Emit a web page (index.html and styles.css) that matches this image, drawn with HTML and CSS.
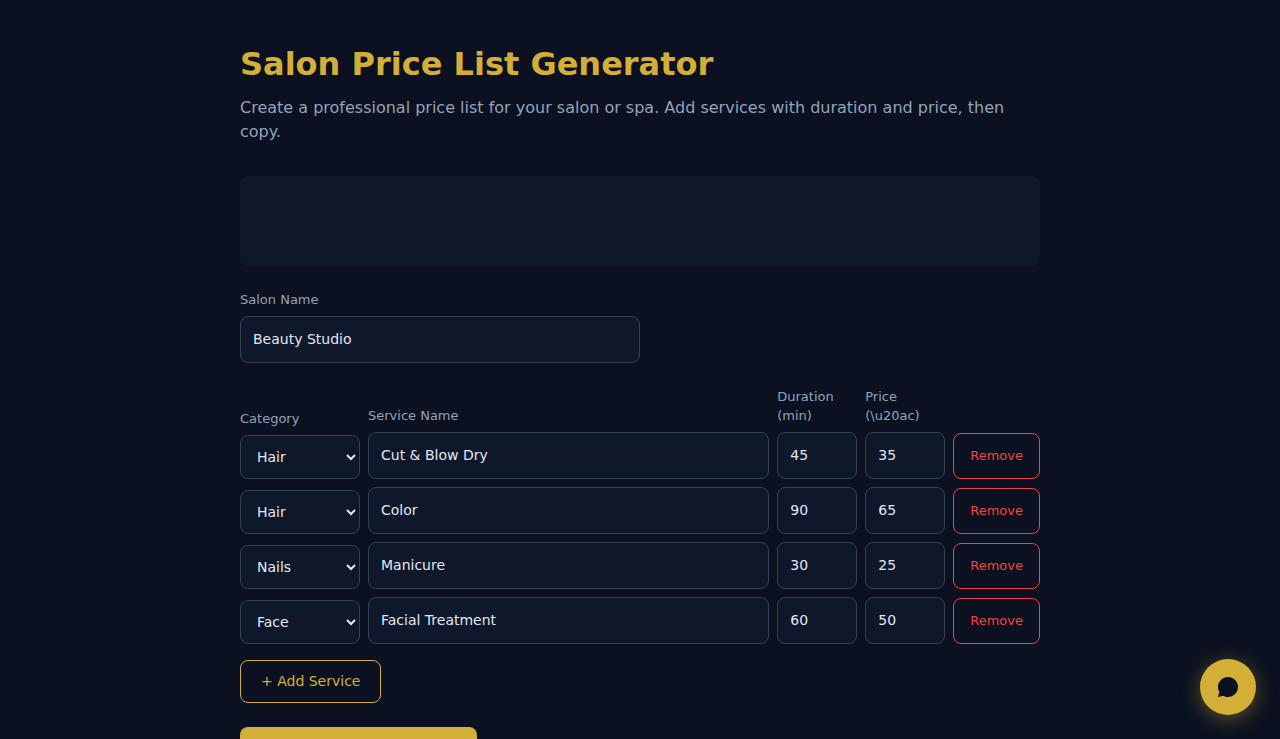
FILE: index.html
```html
<!DOCTYPE html>
<html lang="en">
<head>
    <meta charset="UTF-8">
    <meta name="viewport" content="width=device-width, initial-scale=1.0">
    <title>Salon Price List Generator</title>
    <link rel="stylesheet" href="styles.css">
</head>
<body>
    <main class="container">
        <h1>Salon Price List Generator</h1>
        <p class="subtitle">Create a professional price list for your salon or spa. Add services with duration and price, then copy.</p>

        <div class="banner"></div>

        <div class="field salon-field">
            <label for="salon-name">Salon Name</label>
            <input type="text" id="salon-name" value="Beauty Studio">
        </div>

        <div class="services">
            <div class="service-row">
                <div class="field">
                    <label for="category-1">Category</label>
                    <select id="category-1">
                        <option selected>Hair</option>
                        <option>Nails</option>
                        <option>Face</option>
                    </select>
                </div>
                <div class="field">
                    <label for="service-1">Service Name</label>
                    <input type="text" id="service-1" value="Cut &amp; Blow Dry">
                </div>
                <div class="field">
                    <label for="duration-1">Duration (min)</label>
                    <input type="number" id="duration-1" value="45">
                </div>
                <div class="field">
                    <label for="price-1">Price (\u20ac)</label>
                    <input type="number" id="price-1" value="35">
                </div>
                <button type="button" class="remove-btn">Remove</button>
            </div>

            <div class="service-row">
                <select aria-label="Category">
                    <option selected>Hair</option>
                    <option>Nails</option>
                    <option>Face</option>
                </select>
                <input type="text" aria-label="Service Name" value="Color">
                <input type="number" aria-label="Duration" value="90">
                <input type="number" aria-label="Price" value="65">
                <button type="button" class="remove-btn">Remove</button>
            </div>

            <div class="service-row">
                <select aria-label="Category">
                    <option>Hair</option>
                    <option selected>Nails</option>
                    <option>Face</option>
                </select>
                <input type="text" aria-label="Service Name" value="Manicure">
                <input type="number" aria-label="Duration" value="30">
                <input type="number" aria-label="Price" value="25">
                <button type="button" class="remove-btn">Remove</button>
            </div>

            <div class="service-row">
                <select aria-label="Category">
                    <option>Hair</option>
                    <option>Nails</option>
                    <option selected>Face</option>
                </select>
                <input type="text" aria-label="Service Name" value="Facial Treatment">
                <input type="number" aria-label="Duration" value="60">
                <input type="number" aria-label="Price" value="50">
                <button type="button" class="remove-btn">Remove</button>
            </div>
        </div>

        <div class="actions">
            <button type="button" class="add-btn">+ Add Service</button>
            <button type="button" class="generate-btn">Generate Price List</button>
        </div>
    </main>

    <button type="button" class="chat-btn" aria-label="Open chat">
        <svg width="24" height="24" viewBox="0 0 24 24" fill="currentColor" aria-hidden="true">
            <path d="M12 2C6.48 2 2 6.48 2 12c0 1.8.48 3.5 1.3 4.95L2 22l5.05-1.3C8.5 21.52 10.2 22 12 22c5.52 0 10-4.48 10-10S17.52 2 12 2z"/>
        </svg>
    </button>
</body>
</html>
```
FILE: styles.css
```css
* {
    box-sizing: border-box;
}

body {
    margin: 0;
    font-family: "DejaVu Sans", sans-serif;
    font-size: 16px;
    line-height: 1.5;
    background-color: #0b1120;
    color: #e2e8f0;
}

.container {
    max-width: 840px;
    margin: 0 auto;
    padding: 40px 20px;
}

h1 {
    margin: 0 0 8px;
    font-size: 32px;
    color: #d4af37;
}

.subtitle {
    margin: 0 0 32px;
    color: #94a3b8;
}

.banner {
    min-height: 90px;
    margin-bottom: 24px;
    border-radius: 8px;
    background-color: #0f172a;
}

.field {
    display: flex;
    flex-direction: column;
    gap: 6px;
    min-width: 0;
}

.salon-field {
    max-width: 400px;
    margin-bottom: 24px;
}

label {
    font-size: 13px;
    color: #94a3b8;
}

input, select {
    width: 100%;
    min-width: 0;
    padding: 12px;
    border: 1px solid #334155;
    border-radius: 8px;
    background-color: #0f172a;
    color: #e2e8f0;
    font-family: inherit;
    font-size: 14px;
    line-height: 1.5;
}

select {
    height: 44px;
}

.services {
    display: flex;
    flex-direction: column;
    gap: 8px;
    margin-bottom: 16px;
}

.service-row {
    display: grid;
    grid-template-columns: 120px 1fr 80px 80px auto;
    gap: 8px;
    align-items: end;
}

button {
    border-radius: 8px;
    font-family: inherit;
    line-height: 1.5;
    cursor: pointer;
}

.remove-btn {
    padding: 12px 16px;
    border: 1px solid #ef4444;
    background-color: transparent;
    color: #ef4444;
    font-size: 13px;
}

.actions {
    display: flex;
    flex-direction: column;
    align-items: flex-start;
    gap: 24px;
}

.add-btn {
    padding: 10px 20px;
    border: 1px solid #d4af37;
    background-color: transparent;
    color: #d4af37;
    font-size: 14px;
}

.generate-btn {
    padding: 14px 32px;
    border: none;
    background-color: #d4af37;
    color: #0b1120;
    font-size: 16px;
    font-weight: bold;
}

.chat-btn {
    position: fixed;
    right: 24px;
    bottom: 24px;
    display: flex;
    align-items: center;
    justify-content: center;
    width: 56px;
    height: 56px;
    padding: 0;
    border: none;
    border-radius: 50%;
    background-color: #d4af37;
    color: #0b1120;
    box-shadow: 0 4px 20px rgba(212, 175, 55, 0.4);
}

@media (max-width: 640px) {
    .service-row {
        grid-template-columns: 1fr 1fr;
    }
}
```
